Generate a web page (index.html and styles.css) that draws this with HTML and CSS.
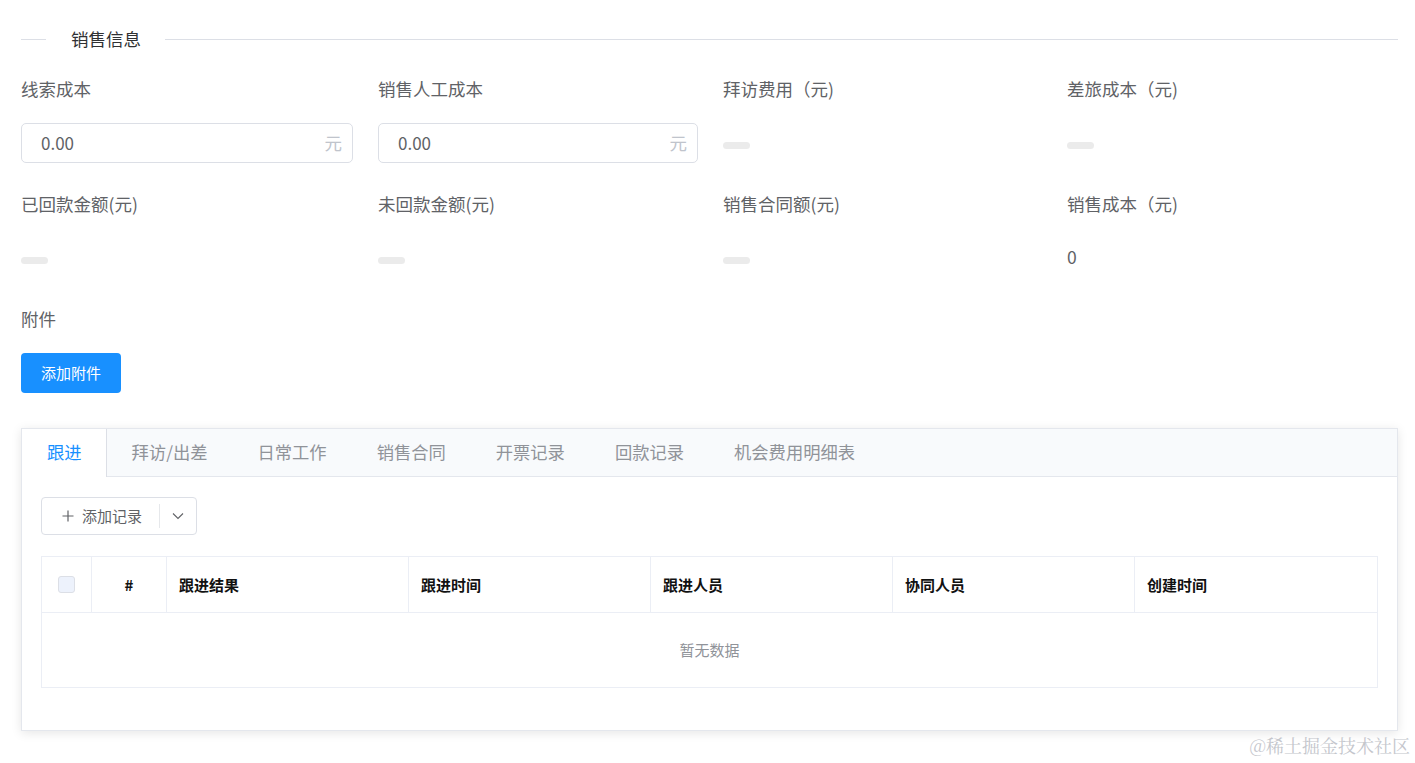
FILE: index.html
```html
<!DOCTYPE html>
<html lang="zh-CN">
<head>
<meta charset="utf-8">
<title>销售信息</title>
<link rel="stylesheet" href="styles.css">
</head>
<body>
<div class="page">
  <div class="divider">
    <span class="divider-line short"></span>
    <span class="divider-text">销售信息</span>
    <span class="divider-line"></span>
  </div>

  <div class="form-grid">
    <div class="form-item">
      <div class="label">线索成本</div>
      <div class="content"><div class="input"><span class="input-val">0.00</span><span class="suffix">元</span></div></div>
    </div>
    <div class="form-item">
      <div class="label">销售人工成本</div>
      <div class="content"><div class="input"><span class="input-val">0.00</span><span class="suffix">元</span></div></div>
    </div>
    <div class="form-item">
      <div class="label">拜访费用（元)</div>
      <div class="content"><span class="skeleton"></span></div>
    </div>
    <div class="form-item">
      <div class="label">差旅成本（元)</div>
      <div class="content"><span class="skeleton"></span></div>
    </div>

    <div class="form-item">
      <div class="label">已回款金额(元)</div>
      <div class="content"><span class="skeleton"></span></div>
    </div>
    <div class="form-item">
      <div class="label">未回款金额(元)</div>
      <div class="content"><span class="skeleton"></span></div>
    </div>
    <div class="form-item">
      <div class="label">销售合同额(元)</div>
      <div class="content"><span class="skeleton"></span></div>
    </div>
    <div class="form-item">
      <div class="label">销售成本（元)</div>
      <div class="content"><span class="value">0</span></div>
    </div>

    <div class="form-item full">
      <div class="label">附件</div>
      <div class="content"><button class="btn-primary">添加附件</button></div>
    </div>
  </div>

  <div class="card">
    <div class="tabs">
      <div class="tab active">跟进</div>
      <div class="tab">拜访/出差</div>
      <div class="tab">日常工作</div>
      <div class="tab">销售合同</div>
      <div class="tab">开票记录</div>
      <div class="tab">回款记录</div>
      <div class="tab">机会费用明细表</div>
    </div>
    <div class="card-body">
      <div class="btn-group">
        <div class="btn-main">
          <svg class="plus" width="12" height="12" viewBox="0 0 12 12"><path d="M6 0.5V11.5M0.5 6H11.5" stroke="#606266" stroke-width="1.2" fill="none"/></svg>
          <span>添加记录</span>
        </div>
        <span class="btn-sep"></span>
        <div class="btn-drop">
          <svg width="12" height="8" viewBox="0 0 12 8"><path d="M1 1.5L6 6.5L11 1.5" stroke="#606266" stroke-width="1.1" fill="none"/></svg>
        </div>
      </div>

      <div class="table">
        <div class="thead">
          <div class="th th-check"><span class="checkbox"></span></div>
          <div class="th th-index">#</div>
          <div class="th">跟进结果</div>
          <div class="th">跟进时间</div>
          <div class="th">跟进人员</div>
          <div class="th">协同人员</div>
          <div class="th last">创建时间</div>
        </div>
        <div class="empty">暂无数据</div>
      </div>
    </div>
  </div>
</div>
<div class="watermark">@稀土掘金技术社区</div>
</body>
</html>
```

FILE: styles.css
```css
* { box-sizing: border-box; }
html, body { margin: 0; padding: 0; background: #fff; }
body {
  font-family: "Noto Sans CJK SC", "Microsoft YaHei", sans-serif;
  color: #606266;
  font-size: 17.5px;
  width: 1415px;
  height: 763px;
  overflow: hidden;
  position: relative;
}
.page { padding: 29px 17px 0 21px; }

.divider { display: flex; align-items: center; height: 20px; margin-bottom: 21px; }
.divider-line { flex: 1; height: 1px; background: #dcdfe6; }
.divider-line.short { flex: 0 0 25px; }
.divider-text { padding: 0 24px 0 25px; color: #303133; font-size: 17.5px; line-height: 18px; }

.form-grid { display: grid; grid-template-columns: 357px 345px 344px 1fr; }
.form-item { margin-bottom: 22px; }
.form-item.full { grid-column: 1 / -1; margin-bottom: 35px; }
.label { height: 40px; line-height: 38px; color: #606266; margin-bottom: 13px; white-space: nowrap; }
.content { height: 40px; display: flex; align-items: center; }

.input {
  width: calc(100% - 25px);
  height: 40px;
  border: 1px solid #dcdfe6;
  border-radius: 5px;
  display: flex;
  align-items: center;
  justify-content: space-between;
  padding: 0 10px 2px 19px;
  background: #fff;
}
.input-val { color: #606266; font-size: 17px; }
.suffix { color: #c0c4cc; font-size: 17.5px; }

.skeleton { display: block; width: 27px; height: 7px; border-radius: 4px; background: #ebebeb; margin-top: 4px; }
.value { color: #606266; font-size: 17.5px; margin-top: -4px; }

.btn-primary {
  width: 100px; height: 40px;
  border: none; border-radius: 4px;
  background: #1890ff; color: #fff;
  font-family: inherit; font-size: 15px;
  padding: 0 0 2px; cursor: pointer;
}

.card {
  border: 1px solid #e4e7ed;
  box-shadow: 0 2px 10px rgba(0,0,0,0.10);
  background: #fff;
}
.tabs {
  display: flex;
  height: 48px;
  background: #f8fafc;
  border-bottom: 1px solid #e4e7ed;
}
.tab {
  padding: 0 25px;
  line-height: 46px;
  color: #909399;
  font-size: 17.3px;
  white-space: nowrap;
}
.tab.active {
  color: #1890ff;
  background: #fff;
  border-right: 1px solid #dcdfe6;
  height: 48px;
  padding-right: 24px;
}
.card-body { padding: 20px 19px 42px 19px; }

.btn-group {
  display: inline-flex;
  align-items: center;
  height: 38px;
  border: 1px solid #dcdfe6;
  border-radius: 4px;
  background: #fff;
  margin-bottom: 21px;
  vertical-align: top;
}
.btn-main { display: flex; align-items: center; height: 100%; padding: 0 17px 2px 20px; font-size: 15px; color: #606266; }
.btn-main .plus { margin-right: 8px; margin-top: 2px; }
.btn-sep { width: 1px; height: 24px; background: #e6e8eb; }
.btn-drop { width: 36px; height: 100%; display: flex; align-items: center; justify-content: center; }

.table { border: 1px solid #ebeef5; }
.thead {
  display: grid;
  grid-template-columns: 50px 75px 1fr 1fr 1fr 1fr 1fr;
  height: 56px;
  border-bottom: 1px solid #ebeef5;
}
.th {
  display: flex; align-items: center;
  padding: 0 12px;
  font-size: 15px; font-weight: bold; color: #111;
  border-right: 1px solid #ebeef5;
}
.th.last { border-right: none; }
.th-check, .th-index { justify-content: center; padding: 0; }
.checkbox {
  display: block; width: 17px; height: 17px;
  border: 1px solid #dcdfe6; border-radius: 3px;
  background: #edf2fc;
}
.empty {
  height: 74px; display: flex; align-items: center; justify-content: center;
  color: #909399; font-size: 15px; padding-bottom: 2px;
}

.watermark {
  position: absolute; right: 5px; bottom: 5px;
  color: #c4c6cc; font-size: 18px;
  font-family: "Noto Serif CJK SC", "Noto Sans CJK SC", sans-serif;
}
```
